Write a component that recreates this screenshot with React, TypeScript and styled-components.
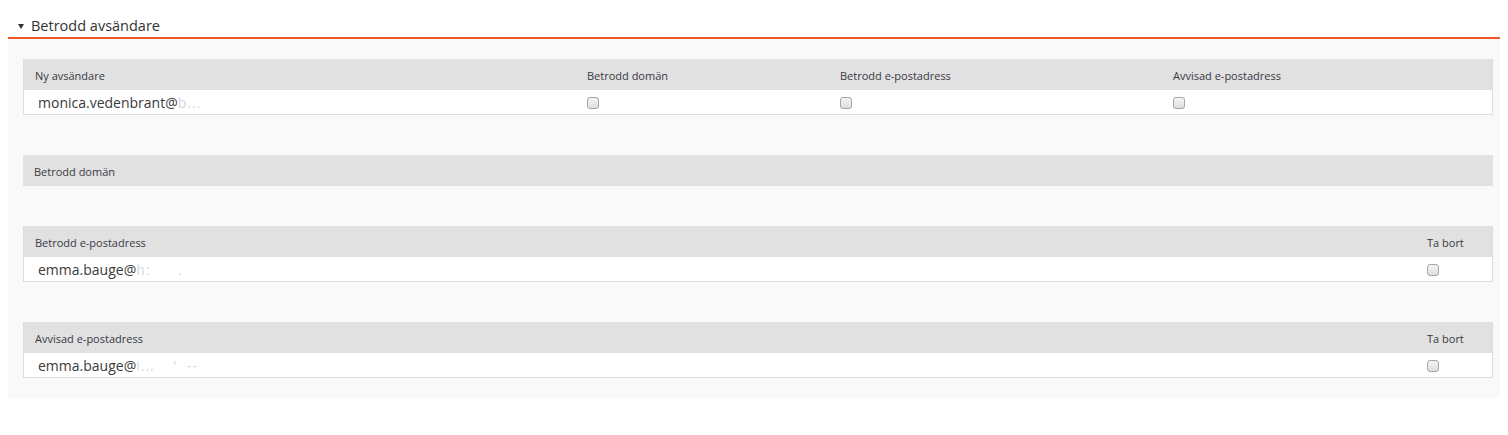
import React from 'react';
import styled, { createGlobalStyle } from 'styled-components';

const GlobalStyle = createGlobalStyle`
  body {
    margin: 8px;
    background: #ffffff;
    font-family: "Open Sans", "Noto Sans", sans-serif;
    color: #333;
  }
`;

const Section = styled.section`
  width: calc(100% + 8px);
`;

const Heading = styled.div`
  display: flex;
  align-items: center;
  height: 31px;
  padding: 6px 0 0 10px;
  box-sizing: border-box;
  border-bottom: 2px solid #f0582a;
  font-size: 14.5px;
  color: #333;
`;

const Caret = styled.span`
  width: 0;
  height: 0;
  border-left: 3px solid transparent;
  border-right: 3px solid transparent;
  border-top: 5px solid #333;
  margin-right: 7px;
  margin-top: 1px;
`;

const Panel = styled.div`
  background: #f9f9f9;
  padding: 20px 15px 20px;
  display: flex;
  flex-direction: column;
  gap: 40px;
`;

const Table = styled.div<{ $cols: string; $bare?: boolean }>`
  display: grid;
  grid-template-columns: ${p => p.$cols};
  border: ${p => (p.$bare ? 'none' : '1px solid #dddddd')};
  border-top: none;
  background: #fff;
`;

const HeadCell = styled.div`
  background: #e1e1e1;
  height: 31px;
  display: flex;
  align-items: center;
  padding-left: 11px;
  font-size: 11px;
  color: #3a3a44;
  padding-top: 1px;
  box-sizing: border-box;
`;

const Cell = styled.div<{ $text?: boolean }>`
  height: 24px;
  display: flex;
  align-items: center;
  padding-left: ${p => (p.$text ? '14px' : '11px')};
  font-size: 14px;
  color: #3a3a3a;
  white-space: nowrap;
  overflow: hidden;
`;

const Faded = styled.span`
  color: #d8d8d8;
  letter-spacing: 1px;
`;

const Check = styled.input.attrs({ type: 'checkbox' })`
  appearance: none;
  width: 12px;
  height: 12px;
  margin: 2px 0 0 0;
  border: 1px solid #a6a6a6;
  border-radius: 3px;
  background: linear-gradient(#f4f4f4, #dedede);
  box-sizing: border-box;
`;

const senderCols = '552px 253px 333px 1fr';
const listCols = '1fr 76px';

export default function App() {
  return (
    <Section>
      <GlobalStyle />
      <Heading>
        <Caret />
        Betrodd avsändare
      </Heading>
      <Panel>
        <Table $cols={senderCols}>
          <HeadCell>Ny avsändare</HeadCell>
          <HeadCell>Betrodd domän</HeadCell>
          <HeadCell>Betrodd e-postadress</HeadCell>
          <HeadCell>Avvisad e-postadress</HeadCell>
          <Cell $text>
            monica.vedenbrant@<Faded>b...</Faded>
          </Cell>
          <Cell><Check /></Cell>
          <Cell><Check /></Cell>
          <Cell><Check /></Cell>
        </Table>

        <Table $cols="1fr" $bare>
          <HeadCell>Betrodd domän</HeadCell>
        </Table>

        <Table $cols={listCols}>
          <HeadCell>Betrodd e-postadress</HeadCell>
          <HeadCell>Ta bort</HeadCell>
          <Cell $text>
            emma.bauge@<Faded>h:&nbsp;&nbsp;&nbsp;&nbsp;&nbsp;&nbsp;.</Faded>
          </Cell>
          <Cell><Check /></Cell>
        </Table>

        <Table $cols={listCols}>
          <HeadCell>Avvisad e-postadress</HeadCell>
          <HeadCell>Ta bort</HeadCell>
          <Cell $text>
            emma.bauge@<Faded>i...&nbsp;&nbsp;&nbsp;&nbsp;'&nbsp;&nbsp;--</Faded>
          </Cell>
          <Cell><Check /></Cell>
        </Table>
      </Panel>
    </Section>
  );
}
